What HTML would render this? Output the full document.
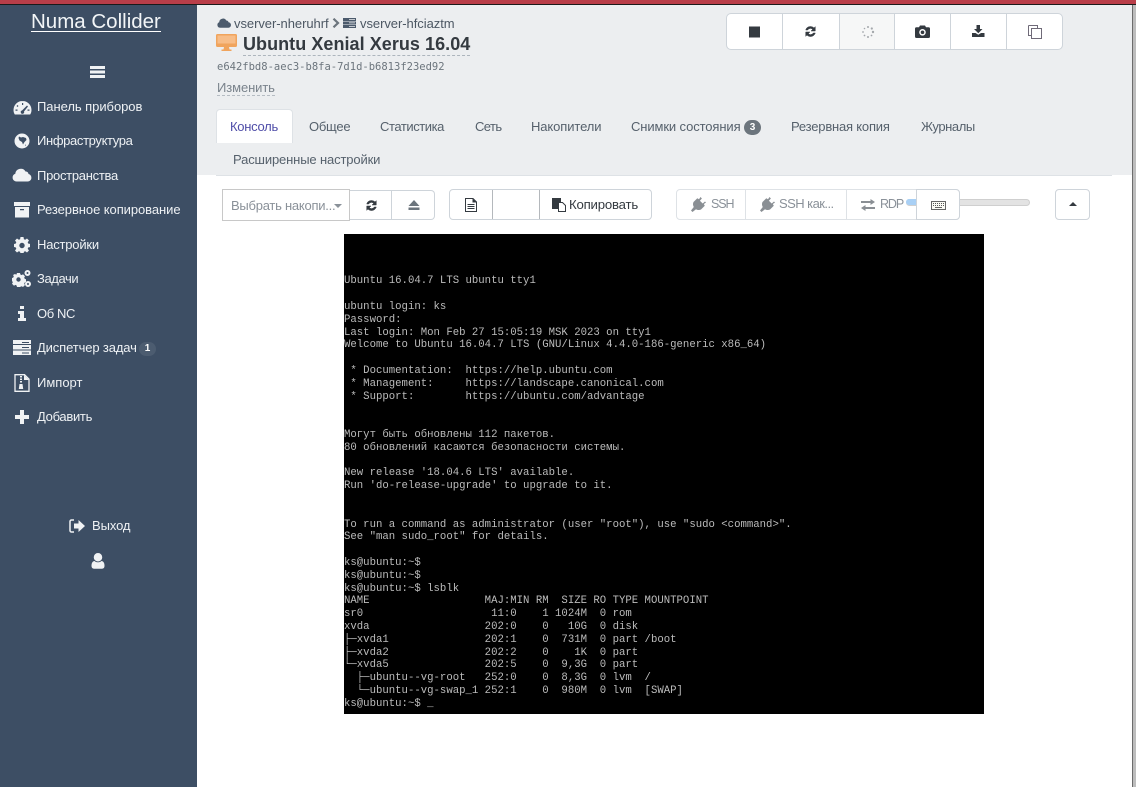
<!DOCTYPE html>
<html lang="ru"><head><meta charset="utf-8"><title>Numa Collider</title>
<style>
html,body{margin:0;padding:0;background:#fff}
body{width:1136px;height:787px;overflow:hidden;position:relative;font-family:"Liberation Sans","Noto Sans CJK SC",sans-serif;font-size:13px;color:#4a5560}
.a{position:absolute;white-space:nowrap}
svg{position:absolute;display:block}
.nav{position:absolute;left:37px;color:#eef1f4;font-size:13px;line-height:18px;white-space:nowrap}
.tab{position:absolute;top:118px;line-height:18px;font-size:13px;color:#56616c;white-space:nowrap}
.box{position:absolute;background:#fff;border:1px solid #ced4da;box-sizing:border-box}
pre{position:absolute;left:344px;top:234px;width:640px;height:480px;margin:0;padding-top:3px;box-sizing:border-box;background:#000;color:#bcbcbc;font-family:"Liberation Mono",monospace;font-size:10.667px;line-height:12.8px;overflow:hidden}
</style></head><body>
<div class="a" style="left:0;top:0;width:1136px;height:4px;background:#b93e49"></div>
<div class="a" style="left:0;top:4px;width:1136px;height:1px;background:#1a1a1a"></div>
<div class="a" style="left:0;top:5px;width:197px;height:782px;background:#3d4e64"></div>
<div class="a" style="left:197px;top:5px;width:935px;height:170px;background:#eceef0"></div>
<div class="a" style="left:216px;top:175px;width:896px;height:1px;background:#dee2e6"></div>
<div class="a" style="left:1132px;top:5px;width:1px;height:782px;background:#6c6c6c"></div>
<div class="a" style="left:1133px;top:5px;width:3px;height:782px;background:#bdbdbd"></div>

<!-- sidebar -->
<div class="a" style="left:31px;top:9px;font-size:20.5px;line-height:26px;color:#f2f5f7;letter-spacing:0;border-bottom:1px solid #fff;height:22px">Numa Collider</div>
<svg style="left:90px;top:65px" width="16" height="14" viewBox="0 0 16 14"><path fill="#f0f2f4" d="M0 1h15v3H0zM0 5.500h15v3H0zM0 10h15v3H0z"/></svg>

<svg style="left:13px;top:100px" width="19" height="15" viewBox="0 0 19 15"><path fill="#f0f2f4" fill-rule="evenodd" d="M9.500 1A9 9 0 0 0 .5 10c0 1.800.5 3.300 1.300 4.500h15.400c.8-1.200 1.300-2.700 1.300-4.500a9 9 0 0 0-9-9zM9 3h1.200v2H9zM4.500 5l1 1-1 1-1-1zM14 5.500l1 1-4 5a1.700 1.700 0 1 1-2-1zM2.500 9.500h2v1.200h-2zm12 0h2v1.200h-2z"/></svg>
<div class="nav" style="top:98px;letter-spacing:-.05px">Панель приборов</div>
<svg style="left:14px;top:133px" width="16" height="16" viewBox="0 0 16 16"><path fill="#f0f2f4" fill-rule="evenodd" d="M8 .5a7.500 7.500 0 1 0 0 15 7.500 7.500 0 0 0 0-15zM5 3.500l2 1 2-.5 3 1 .5 2-2 2-1.500 2.500L8 9 5.500 7.500 4.500 5zM11 11.500l1 .5-1 1z"/></svg>
<div class="nav" style="top:132px;letter-spacing:-.35px">Инфраструктура</div>
<svg style="left:12px;top:168px" width="20" height="14" viewBox="0 0 20 14"><path fill="#f0f2f4" d="M4.500 13.500a4 4 0 0 1-1.200-7.800A5.500 5.500 0 0 1 13.500 3.500a3 3 0 0 1 3 2.500 3.800 3.800 0 0 1-.8 7.500z"/></svg>
<div class="nav" style="top:167px;letter-spacing:-.28px">Пространства</div>
<svg style="left:14px;top:202px" width="17" height="16" viewBox="0 0 17 16"><path fill="#f0f2f4" fill-rule="evenodd" d="M0 0h16v4H0zM1 5h14v10.500H1zM6 7v1.300h4V7z"/></svg>
<div class="nav" style="top:201px;letter-spacing:-.07px">Резервное копирование</div>
<svg style="left:14px;top:237px" width="16" height="16" viewBox="0 0 16 16"><path fill="#f0f2f4" fill-rule="evenodd" d="M6.500 0h3l.4 2.200 1.300.6L13 1.500l2 2-1.300 1.800.6 1.300 2.200.4v3l-2.200.4-.6 1.300 1.300 1.800-2 2-1.800-1.300-1.300.6-.4 2.200h-3l-.4-2.200-1.300-.6L3 15.500l-2-2 1.300-1.800-.6-1.300L0 10V7l1.700-.4.600-1.300L1 3.500l2-2 1.800 1.300 1.300-.6zM8 5.800a2.700 2.700 0 1 0 0 5.400 2.700 2.700 0 0 0 0-5.400z"/></svg>
<div class="nav" style="top:236px;letter-spacing:-.2px">Настройки</div>
<svg style="left:12px;top:270px" width="20" height="18" viewBox="0 0 20 18"><path fill="#f0f2f4" fill-rule="evenodd" d="M5 3h3l.4 1.500 1.300.6L11 4.300l2 2-.8 1.300.6 1.300 1.200.4v2.700l-1.200.4-.6 1.300.8 1.300-2 2-1.300-.8-1.300.6L8 17H5l-.4-1.500-1.300-.6-1.300.8-2-2 .8-1.300-.6-1.300L0 10.700V8l1.200-.4.600-1.300L1 5l2-1 1.300.8zm1.500 4.300a2.200 2.200 0 1 0 0 4.400 2.200 2.200 0 0 0 0-4.400zM15.500 0a3 3 0 1 1 0 6 3 3 0 0 1 0-6zm0 2a1 1 0 1 0 0 2 1 1 0 0 0 0-2zm.5 9a3 3 0 1 1 0 6 3 3 0 0 1 0-6zm0 2a1 1 0 1 0 0 2 1 1 0 0 0 0-2z"/></svg>
<div class="nav" style="top:270px;letter-spacing:-.4px">Задачи</div>
<svg style="left:18px;top:306px" width="8" height="15" viewBox="0 0 8 15"><path fill="#f0f2f4" d="M2 0h4v3H2zM0 5h6v7h2v3H0v-3h2V8H0z"/></svg>
<div class="nav" style="top:305px;letter-spacing:-.4px">Об NC</div>
<svg style="left:13px;top:340px" width="18" height="15" viewBox="0 0 18 15"><path fill="#f0f2f4" d="M0 0h18v4H0zM0 5h18v4.500H0zM0 10.500h18V15H0z"/><path fill="#3d4e64" d="M9 7h7v1H9zM9 12.500h7v1H9zM9 2h7v1H9z"/></svg>
<div class="nav" style="top:339px;letter-spacing:-.13px">Диспетчер задач</div>
<div class="a" style="left:139px;top:342px;width:17px;height:14px;border-radius:7px;background:#4c5c70;color:#fff;font-size:10px;font-weight:bold;line-height:14px;text-align:center">1</div>
<svg style="left:14px;top:374px" width="16" height="18" viewBox="0 0 16 18"><path fill="none" stroke="#f0f2f4" stroke-width="1.300" d="M1 .7h9.500l4.500 4.500v12.100H1z"/><path fill="#f0f2f4" d="M10 1l5 5h-5zM6 2h2v1.500H6zM6 4.500h2V6H6zM6 7h2v1.500H6zM5.500 10h3l.7 5H4.800z"/></svg>
<div class="nav" style="top:374px;letter-spacing:0">Импорт</div>
<svg style="left:15px;top:410px" width="14" height="14" viewBox="0 0 14 14"><path fill="#f0f2f4" d="M5 0h4v5h5v4H9v5H5V9H0V5h5z"/></svg>
<div class="nav" style="top:408px;letter-spacing:-.3px">Добавить</div>
<svg style="left:69px;top:519px" width="17" height="14" viewBox="0 0 17 14"><path fill="none" stroke="#f0f2f4" stroke-width="1.500" d="M5 1H2.500A1.500 1.500 0 0 0 1 2.500v9A1.500 1.500 0 0 0 2.500 13H5"/><path fill="#f0f2f4" d="M5 4.500h4.500V1l6.500 6-6.500 6V9.500H5z"/></svg>
<div class="nav" style="left:92px;top:517px;letter-spacing:-.1px;font-size:13px">Выход</div>
<svg style="left:91px;top:553px" width="14" height="16" viewBox="0 0 14 16"><path fill="#f0f2f4" d="M7 0a4 4 0 0 1 0 8.500A4 4 0 0 1 7 0zM3.500 8c1 .9 2.200 1.300 3.500 1.300S9.500 8.900 10.500 8c2 .3 3 2 3 5 0 1.800-1 2.700-2.500 2.700H3C1.500 15.700.5 14.800.5 13c0-3 1-4.700 3-5z"/></svg>

<!-- header -->
<svg style="left:217px;top:18px" width="14" height="10" viewBox="0 0 14 10"><path fill="#4b5a6c" d="M3 9.700a2.800 2.800 0 0 1-.8-5.400A3.800 3.800 0 0 1 9.300 2.500a2.200 2.200 0 0 1 2.200 1.800A2.700 2.700 0 0 1 11 9.700z"/></svg>
<div class="a" style="left:234px;top:15px;font-size:13px;line-height:18px;color:#4c5763;letter-spacing:-.05px">vserver-nheruhrf</div>
<svg style="left:332px;top:18px" width="8" height="10" viewBox="0 0 8 10"><path fill="none" stroke="#6c757d" stroke-width="2.200" d="M1.500 .7L6 5 1.500 9.300"/></svg>
<svg style="left:343px;top:18px" width="14" height="10" viewBox="0 0 14 10"><path fill="#4b5a6c" d="M0 0h13v3H0zM0 3.500h13v3H0zM0 7h13v3H0z"/><path fill="#eceef0" d="M6 1h6v.7H6zM6 4.500h6v.7H6zM6 8h6v.7H6z"/></svg>
<div class="a" style="left:360px;top:15px;font-size:13px;line-height:18px;color:#4c5763;letter-spacing:-.05px">vserver-hfciaztm</div>
<svg style="left:216px;top:33px" width="21" height="19" viewBox="0 0 21 19"><path fill="#f0a45d" d="M1.500 1h18A1.500 1.500 0 0 1 21 2.500v10a1.500 1.500 0 0 1-1.500 1.500h-6.500l.5 2.500h2V18H5.500v-1.500h2L8 14H1.500A1.500 1.500 0 0 1 0 12.500v-10A1.500 1.500 0 0 1 1.500 1z"/><path fill="#f7bd88" d="M1.500 2.500h18v8h-18z"/></svg>
<div class="a" style="left:243px;top:32px;font-size:18px;line-height:24px;font-weight:bold;color:#343a40;letter-spacing:.05px;border-bottom:1px dashed #adb5bd;height:23px">Ubuntu Xenial Xerus 16.04</div>
<div class="a" style="left:217px;top:60px;font-family:'DejaVu Sans Mono','Liberation Mono',monospace;font-size:10.5px;line-height:15px;color:#6c757d">e642fbd8-aec3-b8fa-7d1d-b6813f23ed92</div>
<div class="a" style="left:217px;top:80px;font-size:13px;line-height:16px;color:#7a838c;letter-spacing:-.1px;border-bottom:1px dashed #b5bcc3;height:15px">Изменить</div>

<!-- action buttons -->
<div class="box" style="left:726px;top:13px;width:337px;height:37px;border-radius:5px"></div>
<div class="a" style="left:782px;top:14px;width:1px;height:35px;background:#ced4da"></div>
<div class="a" style="left:839px;top:14px;width:56px;height:35px;background:#f6f7f7;border-left:1px solid #ced4da;border-right:1px solid #ced4da;box-sizing:border-box"></div>
<div class="a" style="left:950px;top:14px;width:1px;height:35px;background:#ced4da"></div>
<div class="a" style="left:1006px;top:14px;width:1px;height:35px;background:#ced4da"></div>
<svg style="left:749px;top:26px" width="12" height="12" viewBox="0 0 12 12"><path fill="#343a40" d="M0 .5h11v11H0z"/></svg>
<svg style="left:804px;top:25px" width="13" height="13" viewBox="0 0 13 13"><path fill="#343a40" stroke="#343a40" stroke-width=".5" d="M6.500 1.500a5 5 0 0 1 3.500 1.400L11.300 1.600V6H7l1.700-1.700a3.200 3.200 0 0 0-5 .7H1.700a5 5 0 0 1 4.800-3.500zM1.700 7H6L4.300 8.700a3.200 3.200 0 0 0 5-.7h2a5 5 0 0 1-8.300 2.100L1.700 11.400z"/></svg>
<svg style="left:861px;top:25px" width="14" height="14" viewBox="0 0 14 14"><g fill="#a4a8ac"><circle cx="7" cy="2" r="1"/><circle cx="10.800" cy="3.500" r="1.100"/><circle cx="12" cy="7" r="1.200"/><circle cx="10.500" cy="10.500" r=".9"/><circle cx="7" cy="12" r="1"/><circle cx="3.500" cy="10.500" r=".9"/><circle cx="2" cy="7" r=".9"/><circle cx="3.500" cy="3.500" r=".8"/></g></svg>
<svg style="left:915px;top:25px" width="15" height="13" viewBox="0 0 15 13"><path fill="#343a40" fill-rule="evenodd" d="M5 .5h5l1 1.800h2.500A1.500 1.500 0 0 1 15 3.800v7.700a1.500 1.500 0 0 1-1.500 1.500h-12A1.500 1.500 0 0 1 0 11.500V3.800a1.500 1.500 0 0 1 1.500-1.500H4zM7.500 4a3.300 3.300 0 1 0 0 6.600 3.300 3.300 0 0 0 0-6.600zm0 1.500a1.800 1.800 0 1 1 0 3.600 1.800 1.800 0 0 1 0-3.600z"/></svg>
<svg style="left:972px;top:25px" width="13" height="12" viewBox="0 0 13 12"><path fill="#343a40" d="M4.500 0h3.500v4h2.500L6.300 8.300 2 4h2.500zM0 8h3.500l2.800 1.800L9 8h3.500v4H0z"/></svg>
<svg style="left:1028px;top:25px" width="14" height="14" viewBox="0 0 14 14"><path fill="none" stroke="#6f6a78" d="M.5.500h9v3M3.500 10.500H.5V.5"/><path fill="#fff" stroke="#6f6a78" d="M3.500 3.500h10v10h-10z"/></svg>

<!-- tabs -->
<div class="a" style="left:216px;top:109px;width:77px;height:34px;background:#fff;border:1px solid #dee2e6;border-bottom:0;border-radius:4px 4px 0 0;box-sizing:border-box"></div>
<div class="tab" style="left:230px;color:#4f4da8;letter-spacing:-.28px">Консоль</div>
<div class="tab" style="left:309px;letter-spacing:-.25px">Общее</div>
<div class="tab" style="left:380px;letter-spacing:-.43px">Статистика</div>
<div class="tab" style="left:475px;letter-spacing:-.6px">Сеть</div>
<div class="tab" style="left:531px;letter-spacing:-.1px">Накопители</div>
<div class="tab" style="left:631px;letter-spacing:-.11px">Снимки состояния</div>
<div class="a" style="left:744px;top:120px;width:17px;height:15px;border-radius:8px;background:#6c757d;color:#fff;font-size:10px;font-weight:bold;line-height:15px;text-align:center">3</div>
<div class="tab" style="left:791px;letter-spacing:-.2px">Резервная копия</div>
<div class="tab" style="left:921px;letter-spacing:-.43px">Журналы</div>
<div class="tab" style="left:233px;top:151px;letter-spacing:-.14px">Расширенные настройки</div>

<!-- toolbar -->
<div class="box" style="left:222px;top:189px;width:128px;height:32px;border-color:#c8c8c8"></div>
<div class="a" style="left:231px;top:197px;font-size:13px;line-height:18px;color:#8a9199;letter-spacing:-.25px">Выбрать накопи...</div>
<div class="a" style="left:334px;top:204px;width:0;height:0;border:4px solid transparent;border-top-color:#8a9199;border-bottom:0"></div>
<div class="box" style="left:350px;top:190px;width:85px;height:30px;border-left:0;border-radius:0 4px 4px 0"></div>
<div class="a" style="left:391px;top:190px;width:1px;height:30px;background:#ced4da"></div>
<svg style="left:365px;top:199px" width="13" height="13" viewBox="0 0 13 13"><path fill="#343a40" stroke="#343a40" stroke-width=".5" d="M6.500 1.500a5 5 0 0 1 3.500 1.400L11.300 1.600V6H7l1.700-1.700a3.200 3.200 0 0 0-5 .7H1.700a5 5 0 0 1 4.800-3.500zM1.700 7H6L4.300 8.700a3.200 3.200 0 0 0 5-.7h2a5 5 0 0 1-8.300 2.100L1.700 11.400z"/></svg>
<svg style="left:408px;top:200px" width="12" height="10" viewBox="0 0 12 10"><path fill="#6c757d" d="M6 0l5.500 6H.5zM.5 7.500h11V10H.5z"/></svg>

<div class="box" style="left:449px;top:189px;width:203px;height:31px;border-radius:4px"></div>
<div class="a" style="left:492px;top:190px;width:1px;height:29px;background:#b4b8bc"></div>
<div class="a" style="left:539px;top:190px;width:1px;height:29px;background:#b4b8bc"></div>
<svg style="left:465px;top:198px" width="12" height="14" viewBox="0 0 12 14"><path fill="none" stroke="#343a40" d="M.5.500h7.500l3.500 3.500v9.500H.5z"/><path fill="#343a40" d="M7.500.5l4 4h-4zM2.500 6h7v1h-7zM2.500 8h7v1h-7zM2.500 10h7v1h-7z"/></svg>
<svg style="left:552px;top:198px" width="14" height="14" viewBox="0 0 14 14"><path fill="#343a40" d="M0 0h9v4H6v7H0z"/><path fill="#fff" stroke="#343a40" d="M6.500 4.500h4l3 3v6h-7z"/></svg>
<div class="a" style="left:569px;top:196px;font-size:13.2px;line-height:18px;color:#343a40;letter-spacing:-.2px">Копировать</div>

<div class="box" style="left:676px;top:189px;width:284px;height:31px;border-radius:4px;border-color:#dee2e6"></div>
<div class="a" style="left:745px;top:190px;width:1px;height:29px;background:#dee2e6"></div>
<div class="a" style="left:846px;top:190px;width:1px;height:29px;background:#dee2e6"></div>
<svg style="left:691px;top:197px" width="15" height="15" viewBox="0 0 15 15"><path fill="#8a8f94" d="M9.500 0L8 2.200 6.300 1.200 2.500 5c-.8 1.500-.6 3.500.3 5L0 13.500 1.500 15 5 12.200c1.500.9 3.500 1.100 5 .3l3.800-3.800-1-1.700L15 5.500l-1-1-2.300 2-2.800-2.800 2-2.200z"/></svg>
<div class="a" style="left:711px;top:195px;font-size:12.5px;line-height:18px;color:#8a9199;letter-spacing:-1.1px">SSH</div>
<svg style="left:760px;top:197px" width="15" height="15" viewBox="0 0 15 15"><path fill="#8a8f94" d="M9.500 0L8 2.200 6.300 1.200 2.500 5c-.8 1.500-.6 3.500.3 5L0 13.500 1.500 15 5 12.200c1.500.9 3.500 1.100 5 .3l3.800-3.800-1-1.700L15 5.500l-1-1-2.300 2-2.800-2.800 2-2.200z"/></svg>
<div class="a" style="left:779px;top:195px;font-size:13px;line-height:18px;color:#8a9199;letter-spacing:-.55px">SSH как...</div>
<svg style="left:861px;top:199px" width="14" height="12" viewBox="0 0 14 12"><path fill="#8a8f94" d="M9.500 0L14 3 9.500 6V4H0V2h9.500zM4.500 6v2H14v2H4.500v2L0 9z"/></svg>
<div class="a" style="left:880px;top:195px;font-size:12.5px;line-height:18px;color:#8a9199;letter-spacing:-1.1px">RDP</div>
<!-- slider -->
<div class="a" style="left:906px;top:199px;width:124px;height:7px;background:#e3e3e3;border:1px solid #cfcfcf;box-sizing:border-box;border-radius:4px"></div>
<div class="a" style="left:906px;top:199px;width:12px;height:6px;background:#a9d0f5;border-radius:3px 0 0 3px"></div>
<div class="box" style="left:916px;top:189px;width:44px;height:31px;border-radius:0 4px 4px 0"></div>
<svg style="left:931px;top:201px" width="15" height="9" viewBox="0 0 15 9"><path fill="#fbfbf5" stroke="#666" d="M.5.500h14v8H.5z"/><path stroke="#555" stroke-dasharray="1 1" d="M2 2.500h11M2 4.500h11"/><path fill="#666" d="M4 6h7v1H4z"/></svg>
<div class="box" style="left:1055px;top:189px;width:35px;height:31px;border-radius:4px"></div>
<div class="a" style="left:1069px;top:202px;width:0;height:0;border:4px solid transparent;border-bottom-color:#343a40;border-top:0"></div>

<!-- console -->
<pre>



Ubuntu 16.04.7 LTS ubuntu tty1

ubuntu login: ks
Password:
Last login: Mon Feb 27 15:05:19 MSK 2023 on tty1
Welcome to Ubuntu 16.04.7 LTS (GNU/Linux 4.4.0-186-generic x86_64)

 * Documentation:  https://help.ubuntu.com
 * Management:     https://landscape.canonical.com
 * Support:        https://ubuntu.com/advantage


Могут быть обновлены 112 пакетов.
80 обновлений касаются безопасности системы.

New release '18.04.6 LTS' available.
Run 'do-release-upgrade' to upgrade to it.


To run a command as administrator (user "root"), use "sudo &lt;command&gt;".
See "man sudo_root" for details.

ks@ubuntu:~$
ks@ubuntu:~$
ks@ubuntu:~$ lsblk
NAME                  MAJ:MIN RM  SIZE RO TYPE MOUNTPOINT
sr0                    11:0    1 1024M  0 rom
xvda                  202:0    0   10G  0 disk
├─xvda1               202:1    0  731M  0 part /boot
├─xvda2               202:2    0    1K  0 part
└─xvda5               202:5    0  9,3G  0 part
  ├─ubuntu--vg-root   252:0    0  8,3G  0 lvm  /
  └─ubuntu--vg-swap_1 252:1    0  980M  0 lvm  [SWAP]
ks@ubuntu:~$ _</pre>
</body></html>
